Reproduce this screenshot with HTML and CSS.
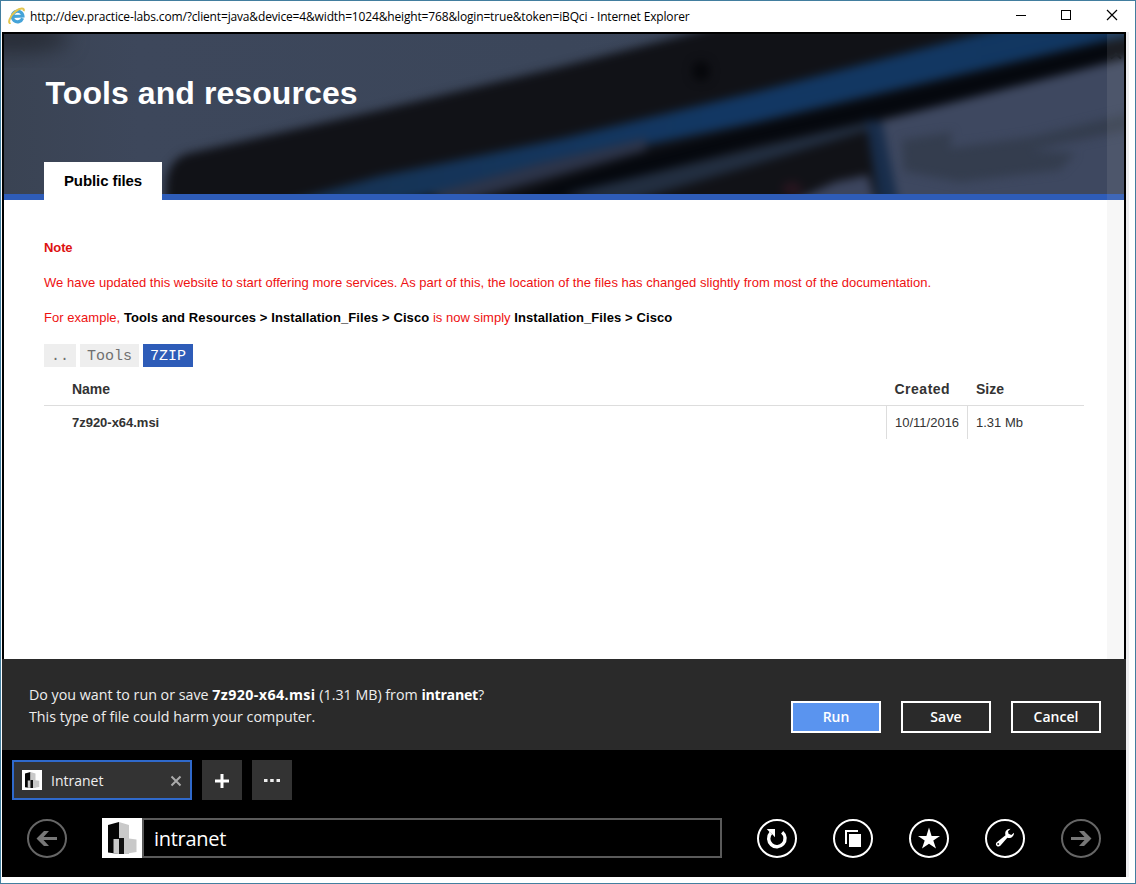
FILE: index.html
```html
<!DOCTYPE html>
<html lang="en">
<head>
<meta charset="utf-8">
<title>Tools and resources</title>
<link rel="stylesheet" href="styles.css">
</head>
<body>
<div class="window">
  <header class="titlebar">
    <svg class="ie-icon" width="18" height="18" viewBox="0 0 18 18">
      <path d="M14.600 11.300A5.300 5.300 0 1 1 14.900 9L5 9.300" fill="none" stroke="#45a3d8" stroke-width="3.200"/>
      <path d="M2.600 16C-.5 17.200 1.500 9 7.500 4.400C12 .8 17 .4 15.600 4.200" fill="none" stroke="#e3c650" stroke-width="2"/>
    </svg>
    <span class="window-title">http://dev.practice-labs.com/?client=java&amp;device=4&amp;width=1024&amp;height=768&amp;login=true&amp;token=iBQci - Internet Explorer</span>
    <svg class="window-controls" width="104" height="14" viewBox="0 0 104 14" fill="none" stroke="#000">
      <path d="M0 6.500H10"/><rect x="45.500" y="1.500" width="9" height="9"/><path d="M91 1l10 10M101 1L91 11" stroke-width="1.200"/>
    </svg>
  </header>
  <div class="viewport">
    <main class="page">
      <div class="banner">
        <svg class="banner-art" width="1120" height="160" viewBox="4 34 1120 160" preserveAspectRatio="none">
          <defs>
            <filter id="soft" x="-10%" y="-30%" width="120%" height="160%" color-interpolation-filters="sRGB"><feGaussianBlur stdDeviation="5"/></filter>
            <filter id="softer" x="-20%" y="-50%" width="140%" height="200%" color-interpolation-filters="sRGB"><feGaussianBlur stdDeviation="10"/></filter>
            <linearGradient id="base"><stop offset="0" stop-color="#3a4353"/><stop offset=".12" stop-color="#3d475b"/><stop offset=".5" stop-color="#3b465a"/><stop offset="1" stop-color="#3f4a60"/></linearGradient>
            <linearGradient id="glow"><stop offset="0" stop-color="#173251"/><stop offset=".5" stop-color="#123763"/><stop offset="1" stop-color="#113660"/></linearGradient>
          </defs>
          <rect x="4" y="34" width="1120" height="160" fill="url(#base)"/>
          <ellipse cx="14" cy="38" rx="55" ry="15" fill="#282d37" filter="url(#softer)"/>
          <g filter="url(#soft)">
            <path d="M166 230V185Q168 158 190 153L380 110L560 67L720 26H1200V230Z" fill="#111217"/>
            <path d="M250 212L380 176L560 139L756 92L1010 26H1180L1107 40L756 122L640 146L500 180L380 206L330 220Z" fill="url(#glow)"/>
            <path d="M430 194L540 163L646 138V150L540 180L450 205Z" fill="#2c3449"/>
            <path d="M470 215L560 181L640 156L756 126L1107 42L1160 30V60L870 120L756 144L560 198Z" fill="#05080e"/>
            <path d="M565 194L756 148L868 122V130L756 164L620 204Z" fill="#222e40"/>
            <path d="M868 124L950 103L1107 63L1160 50V220H896Z" fill="#3e4860"/>
            <path d="M866 120L882 122L900 210H880Z" fill="#182d4b"/>
            <path d="M800 198L835 182L868 175L878 210H790Z" fill="#3c455e"/>
            <ellipse cx="792" cy="189" rx="10" ry="7" fill="#28151f"/>
          </g>
          <g filter="url(#soft)">
            <path d="M902 140L952 132L950 148L1030 137L1130 113V130L1030 150L1075 153L1060 170L960 182L904 171Z" fill="#343d4e"/>
            <ellipse cx="701" cy="71" rx="9" ry="10" fill="#06070b"/>
          </g>
        </svg>
        <h1 class="page-title">Tools and resources</h1>
        <div class="tab">Public files</div>
      </div>
      <section class="content">
        <p class="note-heading">Note</p>
        <p class="note">We have updated this website to start offering more services. As part of this, the location of the files has changed slightly from most of the documentation.</p>
        <p class="note">For example, <b>Tools and Resources &gt; Installation_Files &gt; Cisco</b> is now simply <b>Installation_Files &gt; Cisco</b></p>
        <nav class="crumbs"><span class="crumb">..</span><span class="crumb">Tools</span><span class="crumb current">7ZIP</span></nav>
        <div class="files">
          <div class="row head"><span class="name">Name</span><span class="created">Created</span><span class="size">Size</span></div>
          <div class="row"><b class="name">7z920-x64.msi</b><span class="created">10/11/2016</span><span class="size">1.31 Mb</span></div>
        </div>
      </section>
      <div class="scrollbar"><svg width="17" height="40" viewBox="0 0 17 40"><path d="M4 24.500l5-5 5 5" fill="none" stroke="#20242b" stroke-width="2"/></svg></div>
    </main>
    <section class="download">
      <div class="message">
        <div>Do you want to run or save <b class="file">7z920-x64.msi</b> (1.31 MB) from <b class="host">intranet</b>?</div>
        <div>This type of file could harm your computer.</div>
      </div>
      <div class="actions"><span class="button primary">Run</span><span class="button">Save</span><span class="button">Cancel</span></div>
    </section>
    <footer class="appbar">
      <svg class="defs" width="0" height="0"><symbol id="site" viewBox="0 0 40 40">
        <rect width="40" height="40" fill="#fff"/>
        <path d="M6 7L17 4V36L6 34.500Z" fill="#050505"/><path d="M17 4L27 7V36H17Z" fill="#c9c9c9"/><path d="M27 20.500L34.500 21.500V34L22 36V21Z" fill="#c9c9c9"/><path d="M11.500 21H17V36L11.500 35.500Z" fill="#c9c9c9"/><path d="M17 20H22V36H17Z" fill="#111"/>
      </symbol></svg>
      <div class="tabs">
        <div class="browser-tab"><svg width="20" height="20"><use href="#site"/></svg><span class="tab-name">Intranet</span><svg class="close" width="12" height="12" viewBox="0 0 12 12"><path d="M1.500 1.500l9 9M10.500 1.500l-9 9" stroke="#aaa" stroke-width="2"/></svg></div>
        <div class="square"><svg class="plus" width="14" height="14" viewBox="0 0 14 14"><path d="M7 0V14M0 7H14" stroke="#fff" stroke-width="3"/></svg></div>
        <div class="square"><svg class="dots" width="16" height="4" viewBox="0 0 16 4" fill="#eee"><path d="M0 0h3.500v3H0zM6.200 0h3.500v3H6.200zM12.500 0H16v3h-3.500z"/></svg></div>
      </div>
      <div class="navigation">
        <svg width="40" height="40" viewBox="0 0 40 40"><ellipse cx="20" cy="20.500" rx="19" ry="18.500" fill="none" stroke="#666" stroke-width="2"/><path d="M9.500 20.500L17 13H22L16.500 18.900H30V22H16.500L22 28H17Z" fill="#777"/></svg>
        <div class="address"><svg width="40" height="40"><use href="#site"/></svg><div class="field">intranet</div></div>
        <div class="commands">
          <svg width="40" height="40" viewBox="0 0 40 40"><ellipse cx="20" cy="20.500" rx="19" ry="18.500" fill="none" stroke="#fff" stroke-width="2"/><path d="M13.800 15A8.200 8.200 0 1 0 25.200 14.300" fill="none" stroke="#fff" stroke-width="3.400"/><path d="M9.800 11H18V19.300L15.500 16.500L12.500 14Z" fill="#fff"/></svg>
          <svg width="40" height="40" viewBox="0 0 40 40"><ellipse cx="20" cy="20.500" rx="19" ry="18.500" fill="none" stroke="#fff" stroke-width="2"/><path d="M13 26V13H25" fill="none" stroke="#fff" stroke-width="2"/><path d="M16 16H28V29H16Z" fill="#fff"/></svg>
          <svg width="40" height="40" viewBox="0 0 40 40"><ellipse cx="20" cy="20.500" rx="19" ry="18.500" fill="none" stroke="#fff" stroke-width="2"/><path d="M20 9.500L22.600 18H31L24.300 22.500L27 30.500L20 25.700L13 30.500L15.700 22.500L9 18H17.400Z" fill="#fff"/></svg>
          <svg width="40" height="40" viewBox="0 0 40 40"><ellipse cx="20" cy="20.500" rx="19" ry="18.500" fill="none" stroke="#fff" stroke-width="2"/><path d="M25.500 10.800C21.500 11 19.500 13.500 20.500 17.300L11.500 24.500C9.500 27 13 30 15.300 27.800L22.300 19.800C26 20.800 29 18.500 29 14.700L26.300 17L23.500 15.800L23 13.200Z" fill="#fff"/><circle cx="13.200" cy="26" r="1" fill="#222"/></svg>
          <svg width="40" height="40" viewBox="0 0 40 40"><ellipse cx="20" cy="20.500" rx="19" ry="18.500" fill="none" stroke="#666" stroke-width="2"/><path d="M30.500 20.500L23 13H18L23.500 18.900H10V22H23.500L18 28H23Z" fill="#777"/></svg>
        </div>
      </div>
    </footer>
  </div>
</div>
</body>
</html>
```
FILE: styles.css
```css
* { box-sizing: border-box; }
body { margin: 0; font-family: "Liberation Sans", Arial, sans-serif; }
svg { display: block; flex: none; }
.window { width: 1136px; height: 884px; border: 1px solid #427e9f; background: #fff; overflow: hidden; }
.titlebar { height: 31px; display: flex; align-items: center; padding: 0 0 1px 7px; font: 12px "Open Sans", sans-serif; color: #000; }
.window-title { margin-left: 4px; width: 986px; white-space: nowrap; letter-spacing: -.155px; }
.viewport { width: 1124px; height: 845px; margin-left: 1px; background: #000; padding-top: 2px; box-shadow: 3px 0 #eeeef0; }
.page { position: relative; width: 1120px; height: 625px; margin: 0 2px; background: #fff; overflow: hidden; }
.banner { position: relative; height: 166px; border-bottom: 6px solid #2e5cb8; padding: 40px 40px 0; }
.banner-art { position: absolute; inset: 0; }
.page-title { position: relative; margin: 0; height: 88px; font-size: 32px; line-height: 38px; color: #fff; padding-left: 1.5px; white-space: nowrap; letter-spacing: .08px; }
.tab { position: relative; width: 118px; height: 38px; background: #fff; color: #000; font-size: 15px; line-height: 38px; font-weight: bold; text-align: center; white-space: nowrap; letter-spacing: -.08px; }
.content { padding: 38px 40px 0; font-size: 13px; color: #333; }
.note-heading, .note { margin: 0 0 15px; height: 20px; line-height: 20px; color: #e11; white-space: nowrap; letter-spacing: .034px; }
.note-heading { font-weight: bold; color: #d11; letter-spacing: -.1px; }
.note b { color: #000; letter-spacing: .09px; }
.crumbs { display: flex; gap: 4px; margin-top: 16px; font: 15px "Liberation Mono", monospace; }
.crumb { height: 23px; line-height: 25px; padding: 0 7px; background: #eee; color: #707070; }
.crumb.current { background: #2e5cb8; color: #fff; }
.row { display: grid; grid-template-columns: 842px 81px 117px; height: 33px; line-height: 33px; }
.row span, .row b { padding-left: 8px; white-space: nowrap; }
.row .name { padding-left: 28px; letter-spacing: -.02px; }
.head { height: 39px; line-height: 45px; font-weight: bold; font-size: 14px; border-bottom: 1px solid #ddd; }
.head .created { letter-spacing: .5px; padding-left: 8.5px; }
.head .size { padding-left: 9px; }
.row:not(.head) .created, .row:not(.head) .size { border-left: 1px solid #ddd; }
.scrollbar { position: absolute; top: 0; right: 0; bottom: 0; width: 17px; background: rgba(190, 190, 190, .12); }
.download { height: 91px; background: #2a2a2a; color: #eee; display: flex; justify-content: space-between; padding: 24px 25px 0 27px; font: 14px/22px "Open Sans", sans-serif; }
.message { white-space: nowrap; font-size: 14.25px; padding-top: 1px; }
.message b { color: #fff; }
.file { letter-spacing: .4px; }
.host { letter-spacing: -.3px; }
.actions { display: flex; gap: 20px; padding-top: 18px; }
.button { width: 90px; height: 32px; border: 2px solid #fff; line-height: 28px; text-align: center; font-weight: 600; color: #fff; }
.primary { background: #5a94ef; }
.appbar { padding: 10px; color: #fff; font-family: "Open Sans", sans-serif; }
.defs { position: absolute; }
.tabs { display: flex; gap: 10px; height: 40px; }
.browser-tab { width: 180px; border: 2px solid #2f69cb; background: #333; display: flex; align-items: center; padding: 0 8px; font-size: 14px; }
.tab-name { flex: 1; padding-left: 9px; color: #eee; }
.close, .plus, .dots { margin-top: 1px; }
.square { width: 40px; background: #333; display: grid; place-items: center; }
.navigation { display: flex; margin-top: 18px; height: 40px; padding-left: 15px; }
.address { display: flex; width: 620px; margin-left: 35px; }
.field { flex: 1; border: 2px solid #5a5a5a; font-size: 20px; line-height: 38px; padding-left: 10px; letter-spacing: -.3px; }
.commands { display: flex; gap: 36px; margin-left: 35px; }
```
